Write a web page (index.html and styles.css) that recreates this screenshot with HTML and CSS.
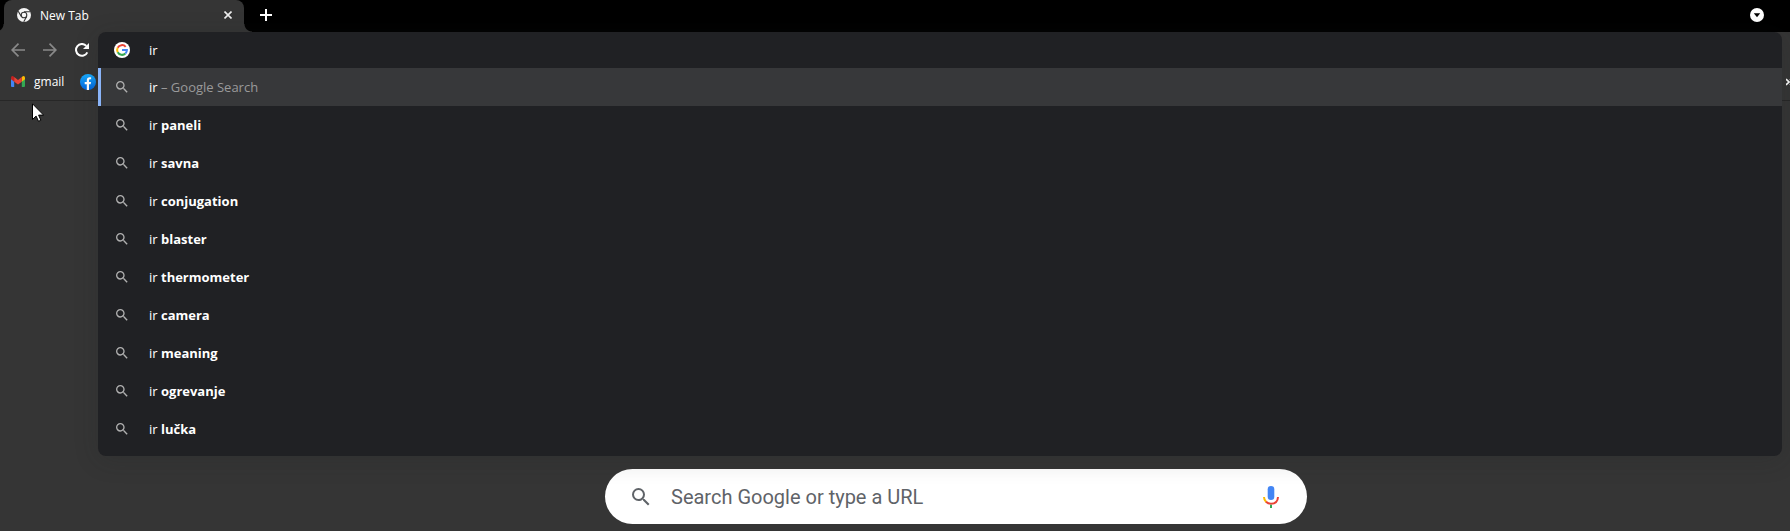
FILE: index.html
```html
<!DOCTYPE html>
<html lang="en">
<head>
<meta charset="utf-8">
<title>New Tab</title>
<link rel="stylesheet" href="styles.css">
</head>
<body>
<svg class="defs" aria-hidden="true">
  <symbol id="search" viewBox="0 0 24 24"><path fill="currentColor" d="M15.5 14h-.79l-.28-.27A6.471 6.471 0 0 0 16 9.5 6.5 6.5 0 1 0 9.5 16c1.61 0 3.09-.59 4.23-1.57l.27.28v.79l5 4.99L20.49 19l-4.99-5zm-6 0C7.01 14 5 11.99 5 9.5S7.01 5 9.5 5 14 7.01 14 9.5 11.99 14 9.5 14z"/></symbol>
</svg>
<header class="browser">
  <div class="tabstrip">
    <div class="tab">
      <svg class="tab-icon" viewBox="0 0 14 14"><circle cx="7" cy="7" r="7" fill="#f5f5f5"/><circle cx="7" cy="7" r="2.8" fill="none" stroke="#353535" stroke-width="1.1"/><path d="M7 3.8h6.2M4.3 8.4 1.2 3.2M9.700 8.500 6.700 13.800" stroke="#353535" stroke-width="1.100"/></svg>
      <span class="tab-title">New Tab</span>
      <button class="icon-button tab-close" aria-label="Close tab"><svg class="close-icon" viewBox="0 0 8 8"><path d="M.5.5l7 7M7.500.5l-7 7" stroke="#eee" stroke-width="1.600"/></svg></button>
    </div>
    <button class="icon-button new-tab" aria-label="New tab"><svg class="plus-icon" viewBox="0 0 12 12"><path d="M6 0v12M0 6h12" stroke="#fff" stroke-width="2"/></svg></button>
    <button class="icon-button tab-search" aria-label="Search tabs"><svg class="tab-search-icon" viewBox="0 0 14 14"><circle cx="7" cy="7" r="7" fill="#fff"/><path d="M3.800 5.200h6.400L7 9.200z" fill="#000"/></svg></button>
  </div>
  <nav class="toolbar">
    <button class="icon-button" aria-label="Back"><svg class="nav-icon" viewBox="0 0 14 14"><path d="M14 7H1.500M7.500.7 1.200 7l6.300 6.300" fill="none" stroke="#898989" stroke-width="1.700"/></svg></button>
    <button class="icon-button" aria-label="Forward"><svg class="nav-icon" viewBox="0 0 14 14"><path d="M0 7h12.500M6.500.7 12.800 7l-6.300 6.300" fill="none" stroke="#898989" stroke-width="1.700"/></svg></button>
    <button class="icon-button" aria-label="Reload"><svg class="nav-icon" viewBox="0 0 14 14"><path d="M12.300 9.300A5.900 5.900 0 1 1 11.300 2.900" fill="none" stroke="#fff" stroke-width="2"/><path d="M14 0v6H8z" fill="#fff"/></svg></button>
  </nav>
  <nav class="bookmarks">
    <a class="bookmark" href="#gmail"><svg class="gmail-icon" viewBox="0 0 14 11"><path d="M0 2v8q0 1 1 1h2.200V4.500z" fill="#4285f4"/><path d="M14 2v8q0 1-1 1h-2.200V4.500z" fill="#34a853"/><path d="M0 1.500Q0 0 1.400 0 2 0 3.200 1v4.700L0 3.300z" fill="#c5221f"/><path d="M14 1.500Q14 0 12.600 0 12 0 10.800 1v4.700L14 3.300z" fill="#fbbc04"/><path d="M3.200 1 7 3.900 10.800 1v4.700L7 8.500 3.200 5.700z" fill="#ea4335"/></svg><span>gmail</span></a>
    <a class="bookmark" href="#facebook" aria-label="Facebook"><svg class="facebook-icon" viewBox="0 0 16 16"><defs><linearGradient id="fb" x2="0" y2="1"><stop stop-color="#18acfe"/><stop offset="1" stop-color="#0165e1"/></linearGradient></defs><circle cx="8" cy="8" r="8" fill="url(#fb)"/><path d="M6.800 15.900v-5.600H4.700V8h2.100V6.400c0-2.300 1.100-3.200 2.900-3.200.6 0 1 0 1.400.1v2h-.9c-.9 0-1.200.4-1.200 1.200V8h2.100l-.4 2.300H9v5.600z" fill="#fff"/></svg></a>
    <button class="icon-button more" aria-label="More bookmarks"><svg class="more-icon" viewBox="0 0 4 8"><path d="M0 1l3 3-3 3M4 1l3 3-3 3" fill="none" stroke="#fff" stroke-width="1.600"/></svg></button>
  </nav>
</header>
<main class="page">
  <form class="search-box">
    <svg class="search-icon"><use href="#search"/></svg>
    <input class="search-input" type="text" placeholder="Search Google or type a URL" aria-label="Search Google or type a URL">
    <button class="icon-button" type="button" aria-label="Search by voice"><svg class="mic-icon" viewBox="0 0 16 22"><rect x="4.700" width="6.600" height="14" rx="3.300" fill="#4285f4"/><path d="M1 11q0 3 2.200 5" fill="none" stroke="#fbbc04" stroke-width="2"/><path d="M3 15.700Q5 17.700 8 17.700q6.700 0 7-6.700" fill="none" stroke="#ea4335" stroke-width="2"/><path d="M8 18.700V22" stroke="#34a853" stroke-width="2"/></svg></button>
  </form>
</main>
<section class="omnibox">
  <div class="address">
    <svg class="google-icon" viewBox="0 0 16 16"><circle cx="8" cy="8" r="8" fill="#fff"/><g fill="none" stroke-width="2"><path d="M11.700 4.800A4.900 4.900 0 0 0 3.700 5.700" stroke="#ea4335"/><path d="M3.700 5.700a4.900 4.900 0 0 0 0 4.600" stroke="#fbbc05"/><path d="M3.700 10.300a4.900 4.900 0 0 0 7.700 1.200" stroke="#34a853"/><path d="M11.400 11.500A4.800 4.800 0 0 0 12.900 8H8" stroke="#4285f4"/></g></svg>
    <input class="address-input" type="text" value="ir" aria-label="Address and search bar">
  </div>
  <ul class="suggestions">
    <li class="suggestion selected"><svg class="row-icon"><use href="#search"/></svg><span>ir <span class="hint">– Google Search</span></span></li>
    <li class="suggestion"><svg class="row-icon"><use href="#search"/></svg><span>ir <b>paneli</b></span></li>
    <li class="suggestion"><svg class="row-icon"><use href="#search"/></svg><span>ir <b>savna</b></span></li>
    <li class="suggestion"><svg class="row-icon"><use href="#search"/></svg><span>ir <b>conjugation</b></span></li>
    <li class="suggestion"><svg class="row-icon"><use href="#search"/></svg><span>ir <b>blaster</b></span></li>
    <li class="suggestion"><svg class="row-icon"><use href="#search"/></svg><span>ir <b>thermometer</b></span></li>
    <li class="suggestion"><svg class="row-icon"><use href="#search"/></svg><span>ir <b>camera</b></span></li>
    <li class="suggestion"><svg class="row-icon"><use href="#search"/></svg><span>ir <b>meaning</b></span></li>
    <li class="suggestion"><svg class="row-icon"><use href="#search"/></svg><span>ir <b>ogrevanje</b></span></li>
    <li class="suggestion"><svg class="row-icon"><use href="#search"/></svg><span>ir <b>lučka</b></span></li>
  </ul>
</section>
<svg class="cursor" viewBox="0 0 12 19" aria-hidden="true"><path d="M.5.8v15.700l3.600-3.400 2.400 5.200 2.400-1.100-2.300-5.100h5z" fill="#fff" stroke="#000"/></svg>
</body>
</html>
```

FILE: styles.css
```css
* { box-sizing: border-box; }
body {
  margin: 0;
  min-height: 100vh;
  overflow: hidden;
  background: #353535;
  color: #fff;
  font-family: "Open Sans", "Noto Sans", sans-serif;
  font-size: 13px;
}
svg { display: block; flex: none; }
.defs { position: absolute; width: 0; height: 0; }
.icon-button {
  display: flex;
  flex: none;
  padding: 0;
  border: 0;
  background: none;
}

.tabstrip {
  display: flex;
  align-items: center;
  height: 32px;
  padding: 0 26px 0 4px;
  background: #000;
}
.tab {
  position: relative;
  display: flex;
  align-items: center;
  width: 240px;
  height: 32px;
  padding: 0 12px 2px 13px;
  border-radius: 8px 8px 0 0;
  background: #353535;
  font-size: 12px;
}
.tab::before, .tab::after {
  content: "";
  position: absolute;
  bottom: 0;
  width: 8px;
  height: 8px;
}
.tab::before { right: 100%; background: radial-gradient(circle at 0 0, #000 7px, #353535 8px); }
.tab::after { left: 100%; background: radial-gradient(circle at 100% 0, #000 7px, #353535 8px); }
.tab-icon { width: 14px; height: 14px; }
.tab-title { margin-left: 9px; }
.tab-close { margin-left: auto; }
.close-icon { width: 8px; height: 8px; }
.new-tab { margin: 0 auto 2px 16px; }
.plus-icon { width: 12px; height: 12px; }
.tab-search { margin-bottom: 2px; }
.tab-search-icon { width: 14px; height: 14px; }

.toolbar {
  display: flex;
  align-items: center;
  gap: 18px;
  height: 36px;
  padding: 0 11px;
}
.nav-icon { width: 14px; height: 14px; }
.bookmarks {
  display: flex;
  align-items: center;
  gap: 16px;
  height: 33px;
  padding: 0 0 5px 11px;
  border-bottom: 1px solid #272727;
  font-size: 12px;
}
.bookmark {
  display: flex;
  align-items: center;
  gap: 9px;
  color: #fff;
  text-decoration: none;
}
.gmail-icon { width: 14px; height: 11px; }
.facebook-icon { width: 16px; height: 16px; }
.more { margin-left: auto; }
.more-icon { width: 4px; height: 8px; }

.omnibox {
  position: absolute;
  top: 32px;
  right: 8px;
  left: 98px;
  padding-bottom: 8px;
  border-radius: 8px;
  background: #202124;
  box-shadow: 0 4px 24px rgba(32, 33, 36, .2);
}
.address {
  display: flex;
  align-items: center;
  gap: 19px;
  height: 36px;
  padding: 0 16px;
}
.google-icon { width: 16px; height: 16px; }
.address-input {
  flex: 1;
  padding: 0;
  border: 0;
  outline: 0;
  background: none;
  color: #fff;
  font: inherit;
}
.suggestions { margin: 0; padding: 0; list-style: none; }
.suggestion {
  display: flex;
  align-items: center;
  gap: 19px;
  height: 38px;
  padding: 0 16px;
}
.selected {
  background: #37383a;
  box-shadow: inset 3px 0 #8ab4f8;
}
.row-icon { width: 16px; height: 16px; color: #b0b0b0; }
.hint { color: #9a9a9a; }

.page {
  display: flex;
  justify-content: center;
  padding: 368px 0 0 122px;
}
.search-box {
  display: flex;
  align-items: center;
  width: 702px;
  height: 55px;
  padding: 0 28px 0 24px;
  border-radius: 28px;
  background: #fff;
}
.search-icon { width: 24px; height: 24px; color: #5f6368; }
.search-input {
  flex: 1;
  margin-left: 18px;
  padding: 0;
  border: 0;
  outline: 0;
  background: none;
  font-family: Roboto, sans-serif;
  font-size: 20px;
}
.search-input::placeholder { color: #5f6368; opacity: 1; }
.mic-icon { width: 16px; height: 22px; }

.cursor {
  position: absolute;
  top: 103px;
  left: 32px;
  width: 12px;
  height: 19px;
}
```
